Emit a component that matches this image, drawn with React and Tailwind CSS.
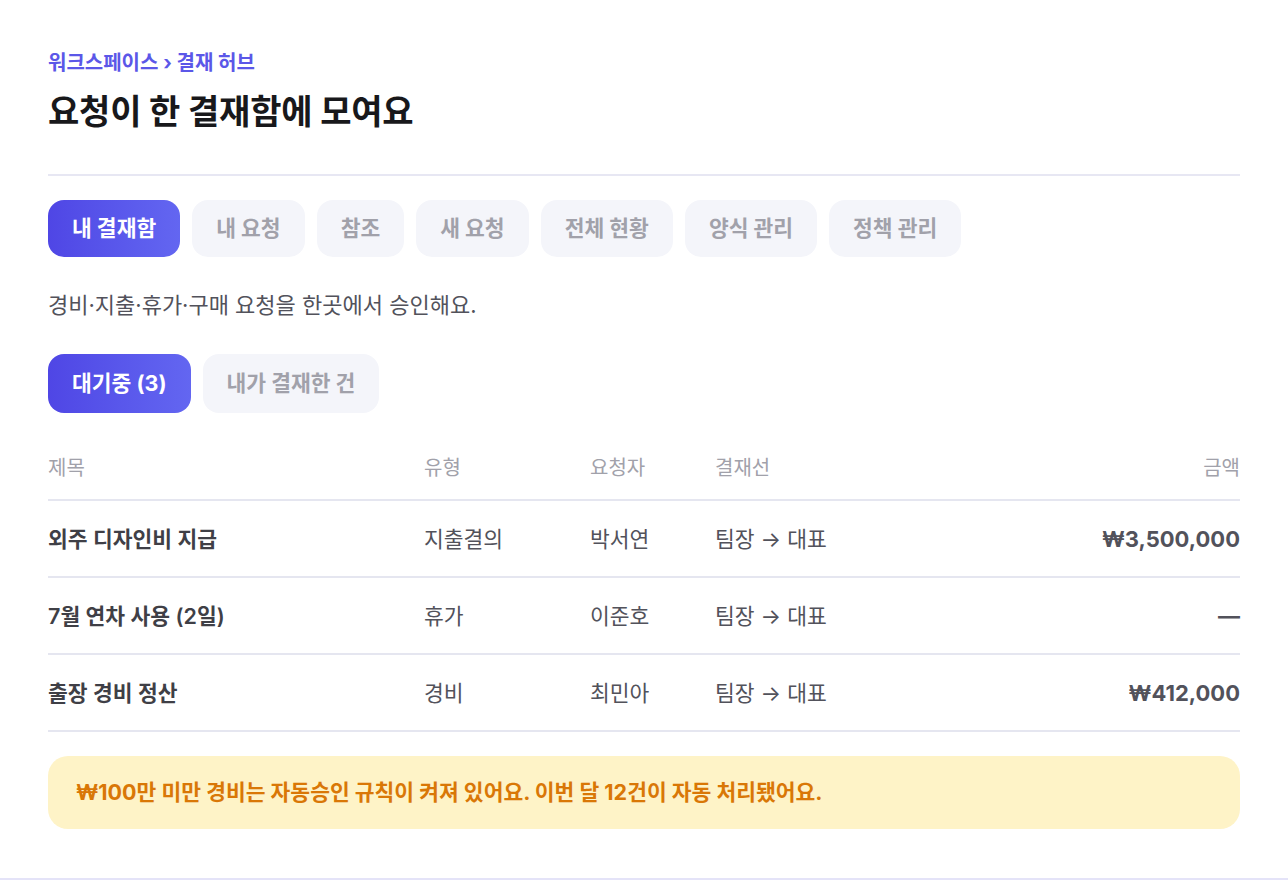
import React from 'react';

const mainTabs = ['내 결재함', '내 요청', '참조', '새 요청', '전체 현황', '양식 관리', '정책 관리'];

const rows = [
  { title: '외주 디자인비 지급', type: '지출결의', requester: '박서연', line: '팀장 → 대표', amount: '₩3,500,000' },
  { title: '7월 연차 사용 (2일)', type: '휴가', requester: '이준호', line: '팀장 → 대표', amount: '—' },
  { title: '출장 경비 정산', type: '경비', requester: '최민아', line: '팀장 → 대표', amount: '₩412,000' },
];

const cols = 'grid grid-cols-[376px_166px_125px_1fr_auto] items-center';

export default function App() {
  return (
    <div
      className="min-h-[880px] bg-white"
      style={{ fontFamily: 'Inter, "Noto Sans CJK KR", "Noto Sans", sans-serif' }}
    >
      <section className="px-12 pt-[49px] pb-[49px] border-b-2 border-[#e4e3f8]">
        <p className="text-[20px] font-bold text-[#5b57e8] leading-7">워크스페이스 › 결재 허브</p>
        <h1 className="mt-[13px] text-[34px] font-bold text-[#18181b] leading-[44px] tracking-[-0.2px]">
          요청이 한 결재함에 모여요
        </h1>

        <div className="mt-[40px] h-[2px] bg-[#e7e7f3]" />

        <div className="mt-6 flex gap-3">
          {mainTabs.map((t, i) => (
            <button
              key={t}
              className={
                i === 0
                  ? 'h-[57px] px-6 rounded-2xl text-[21.5px] font-bold text-white bg-gradient-to-r from-[#4f46e5] to-[#6366f1]'
                  : 'h-[57px] px-6 rounded-2xl text-[21.5px] font-bold text-[#a1a1aa] bg-[#f4f5fa]'
              }
            >
              {t}
            </button>
          ))}
        </div>

        <p className="mt-[33px] text-[22px] text-[#52525b] leading-[30px]">경비·지출·휴가·구매 요청을 한곳에서 승인해요.</p>

        <div className="mt-[34px] flex gap-3">
          <button className="h-[59px] px-6 rounded-2xl text-[21.5px] font-bold text-white bg-gradient-to-r from-[#4f46e5] to-[#6366f1]">
            대기중 (3)
          </button>
          <button className="h-[59px] px-6 rounded-2xl text-[21.5px] font-bold text-[#a1a1aa] bg-[#f4f5fa]">
            내가 결재한 건
          </button>
        </div>

        <div className="mt-[41px]">
          <div className={`${cols} pb-[17px] border-b-2 border-[#e5e6f0] text-[20px] text-[#a1a1aa] leading-7`}>
            <span>제목</span>
            <span>유형</span>
            <span>요청자</span>
            <span>결재선</span>
            <span className="text-right">금액</span>
          </div>
          {rows.map((r) => (
            <div
              key={r.title}
              className={`${cols} h-[77px] border-b-2 border-[#e5e6f0] text-[21.5px] text-[#52525b] leading-[30px]`}
            >
              <span className="font-semibold text-[#3f3f46]">{r.title}</span>
              <span>{r.type}</span>
              <span>{r.requester}</span>
              <span>{r.line}</span>
              <span className="text-right text-[22px] font-bold text-[#52525b]">{r.amount}</span>
            </div>
          ))}
        </div>

        <div className="mt-6 rounded-[20px] bg-[#fef3c7] px-7 py-[21px] text-[21.5px] font-bold text-[#d97706] leading-[31px]">
          ₩100만 미만 경비는 자동승인 규칙이 켜져 있어요. 이번 달 12건이 자동 처리됐어요.
        </div>
      </section>
    </div>
  );
}
